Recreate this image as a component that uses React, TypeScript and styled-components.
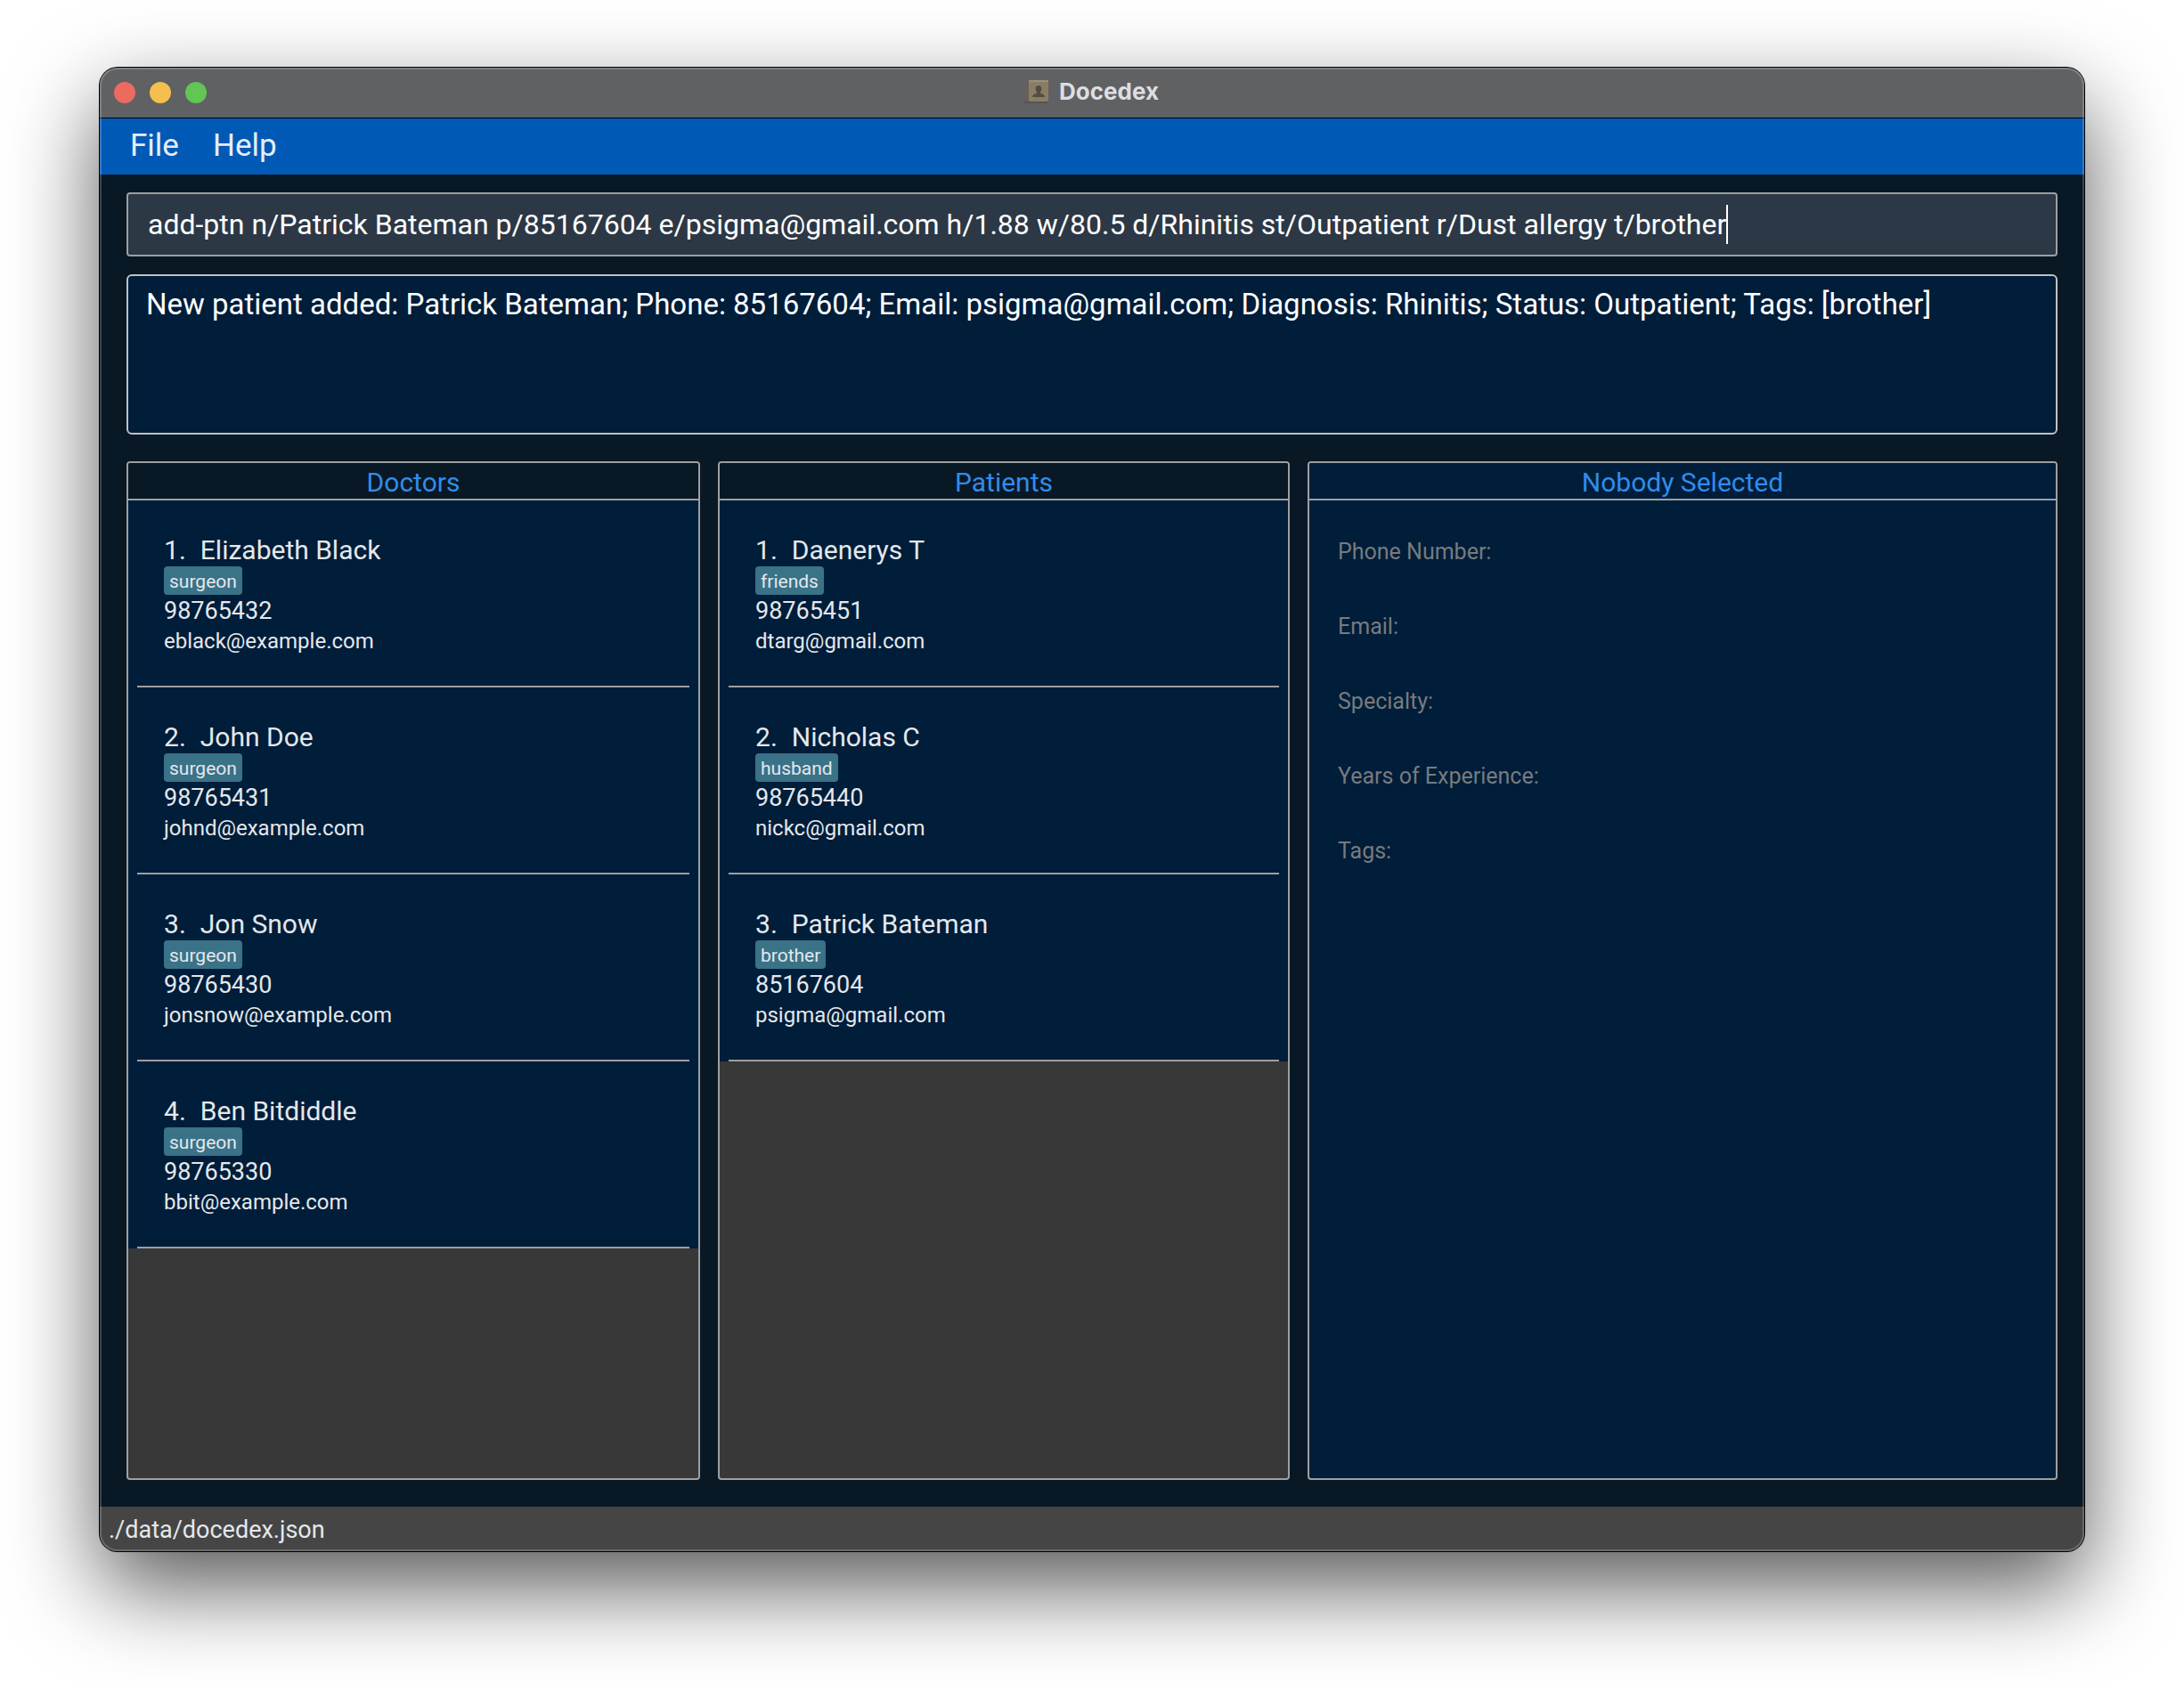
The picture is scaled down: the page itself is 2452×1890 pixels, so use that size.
import React, { useState } from 'react';
import styled, { createGlobalStyle } from 'styled-components';

const GlobalStyle = createGlobalStyle`
  *, *::before, *::after { box-sizing: border-box; }
  body { margin: 0; background: #fff; }
`;

const fontStack = 'Roboto, "Liberation Sans", sans-serif';
const line = '#9d9fa0';
const navy = '#001d3a';
const ink = '#091825';

const Desktop = styled.div`
  display: flex;
  min-height: 100vh;
  padding: 76px 112px 148px;
  font-family: ${fontStack};
  color: #e4e8eb;
`;

const Frame = styled.div`
  flex: 1;
  min-width: 0;
  display: flex;
  border-radius: 20px;
  box-shadow: 0 0 0 1px #000, 0 40px 100px rgba(0, 0, 0, 0.66);
`;

const AppWindow = styled.div`
  position: relative;
  flex: 1;
  min-width: 0;
  display: flex;
  flex-direction: column;
  overflow: hidden;
  border-radius: 20px;
  background: ${ink};
`;

const Edge = styled.div`
  position: absolute;
  inset: 0;
  border-radius: 20px;
  box-shadow: inset 0 0 0 2px rgba(255, 255, 255, 0.2);
  pointer-events: none;
`;

const TitleBar = styled.header`
  display: grid;
  grid-template-columns: 1fr auto 1fr;
  align-items: center;
  height: 57px;
  padding: 0 16px;
  border-bottom: 1px solid #000;
  background: #5f6163;
`;

const Lights = styled.div`
  display: flex;
  gap: 16px;
`;

const Light = styled.button<{ $color: string }>`
  width: 24px;
  height: 24px;
  padding: 0;
  border: 0;
  border-radius: 50%;
  background: ${(p) => p.$color};
`;

const Title = styled.h1`
  display: flex;
  align-items: center;
  gap: 10px;
  margin: 0;
  padding: 0 2px 2px 0;
  font: 700 26px/32px Inter, sans-serif;
  color: #dddee0;
`;

const MenuBar = styled.nav`
  display: flex;
  gap: 38px;
  padding: 6px 34px 7px;
  background: #005ab5;
`;

const MenuButton = styled.button`
  padding: 0;
  border: 0;
  background: none;
  font: 35px/50px ${fontStack};
  color: #e4eef8;
`;

const Body = styled.main`
  flex: 1;
  display: flex;
  flex-direction: column;
  gap: 20px;
  padding: 20px 30px;
`;

const CommandBox = styled.label`
  display: flex;
  align-items: center;
  padding: 0 22px;
  border: 2px solid ${line};
  border-radius: 4px;
  background: #2c3845;
  cursor: text;
`;

const CommandInput = styled.input`
  field-sizing: content;
  min-width: 0;
  height: 68px;
  padding: 0;
  border: 0;
  outline: 0;
  background: none;
  font: 32px/44px ${fontStack};
  color: #fff;
  caret-color: transparent;
`;

const Caret = styled.i`
  flex: none;
  width: 2px;
  height: 44px;
  background: #fff;
`;

const Result = styled.output`
  display: block;
  min-height: 180px;
  padding: 10px 20px;
  border: 2px solid #bfc1c5;
  border-radius: 6px;
  background: ${navy};
  font: 33px/44px ${fontStack};
  color: #fff;
`;

const Panels = styled.div`
  flex: 1;
  display: grid;
  grid-template-columns: 644fr 642fr 842fr;
  gap: 20px;
  padding: 10px 0;
`;

const Panel = styled.section<{ $fill: string }>`
  display: flex;
  flex-direction: column;
  overflow: hidden;
  border: 2px solid ${line};
  border-radius: 4px;
  background: ${(p) => p.$fill};
`;

const PanelTitle = styled.h2<{ $fill: string }>`
  margin: 0;
  padding-top: 4px;
  border-bottom: 2px solid ${line};
  background: ${(p) => p.$fill};
  font: 30px/36px ${fontStack};
  text-align: center;
  color: #318ceb;
`;

const List = styled.ol`
  margin: 0;
  padding: 0;
  list-style: none;
`;

const Item = styled.li`
  padding: 0 10px;
  background: ${navy};
`;

const Card = styled.article`
  padding: 38px 30px 33px;
  border-bottom: 2px solid ${line};
`;

const Name = styled.h3`
  display: flex;
  gap: 16px;
  margin: 0;
  font: 30px/36px ${fontStack};
`;

const Tag = styled.span`
  display: block;
  width: fit-content;
  margin-bottom: 1px;
  padding: 2px 6px 0;
  border-radius: 4px;
  background: #3a7288;
  font-size: 21px;
  line-height: 30px;
`;

const Phone = styled.p`
  margin: 0;
  font-size: 27px;
  line-height: 34px;
`;

const Email = styled.p`
  margin: 0;
  font-size: 24px;
  line-height: 34px;
`;

const Fields = styled.ul`
  display: grid;
  gap: 48px;
  margin: 0;
  padding: 40px 32px;
  list-style: none;
  font-size: 25px;
  line-height: 36px;
  color: #777b7e;
`;

const StatusBar = styled.footer`
  padding: 8px 10px 6px;
  background: #454545;
  font-size: 27px;
  line-height: 36px;
`;

const BookIcon = () => (
  <svg width="30" height="28" viewBox="0 0 30 28" aria-hidden="true">
    <rect x="1" y="2" width="27" height="25" rx="2" fill="#555453" />
    <rect x="1" y="1" width="5" height="24" rx="1" fill="#655f5d" />
    <rect x="6" y="1" width="22" height="24" rx="1" fill="#8b7d62" />
    <rect x="6" y="1" width="22" height="2" fill="#9a907d" />
    <path
      d="M17 7c2.200 0 3.400 1.500 3.400 3.700 0 1.600-.8 2.800-1.500 3.600v1.500c1.800.7 5 1.300 5 4.200H10.100c0-2.900 3.200-3.500 5-4.200v-1.500c-.7-.8-1.500-2-1.500-3.600C13.600 8.500 14.800 7 17 7z"
      fill="#524c44"
    />
  </svg>
);

type Person = { name: string; tag: string; phone: string; email: string };

const doctors: Person[] = [
  { name: 'Elizabeth Black', tag: 'surgeon', phone: '98765432', email: 'eblack@example.com' },
  { name: 'John Doe', tag: 'surgeon', phone: '98765431', email: 'johnd@example.com' },
  { name: 'Jon Snow', tag: 'surgeon', phone: '98765430', email: 'jonsnow@example.com' },
  { name: 'Ben Bitdiddle', tag: 'surgeon', phone: '98765330', email: 'bbit@example.com' },
];

const patients: Person[] = [
  { name: 'Daenerys T', tag: 'friends', phone: '98765451', email: 'dtarg@gmail.com' },
  { name: 'Nicholas C', tag: 'husband', phone: '98765440', email: 'nickc@gmail.com' },
  { name: 'Patrick Bateman', tag: 'brother', phone: '85167604', email: 'psigma@gmail.com' },
];

const fields = ['Phone Number:', 'Email:', 'Specialty:', 'Years of Experience:', 'Tags:'];

const PersonPanel = ({ title, people }: { title: string; people: Person[] }) => (
  <Panel $fill="#383838">
    <PanelTitle $fill={ink}>{title}</PanelTitle>
    <List>
      {people.map((person, i) => (
        <Item key={person.email}>
          <Card>
            <Name>
              <span>{i + 1}.</span>
              <span>{person.name}</span>
            </Name>
            <Tag>{person.tag}</Tag>
            <Phone>{person.phone}</Phone>
            <Email>{person.email}</Email>
          </Card>
        </Item>
      ))}
    </List>
  </Panel>
);

export default function App() {
  const [command, setCommand] = useState(
    'add-ptn n/Patrick Bateman p/85167604 e/psigma@gmail.com h/1.88 w/80.5 d/Rhinitis st/Outpatient r/Dust allergy t/brother'
  );

  return (
    <>
      <GlobalStyle />
      <Desktop>
        <Frame>
          <AppWindow>
            <TitleBar>
              <Lights>
                <Light $color="#ed6a5f" aria-label="Close" />
                <Light $color="#f5bf4f" aria-label="Minimize" />
                <Light $color="#61c654" aria-label="Zoom" />
              </Lights>
              <Title>
                <BookIcon />
                Docedex
              </Title>
            </TitleBar>
            <MenuBar>
              <MenuButton>File</MenuButton>
              <MenuButton>Help</MenuButton>
            </MenuBar>
            <Body>
              <CommandBox>
                <CommandInput
                  aria-label="Command"
                  value={command}
                  onChange={(e) => setCommand(e.target.value)}
                />
                <Caret />
              </CommandBox>
              <Result>
                New patient added: Patrick Bateman; Phone: 85167604; Email: psigma@gmail.com; Diagnosis: Rhinitis;
                Status: Outpatient; Tags: [brother]
              </Result>
              <Panels>
                <PersonPanel title="Doctors" people={doctors} />
                <PersonPanel title="Patients" people={patients} />
                <Panel $fill={navy}>
                  <PanelTitle $fill={navy}>Nobody Selected</PanelTitle>
                  <Fields>
                    {fields.map((label) => (
                      <li key={label}>{label}</li>
                    ))}
                  </Fields>
                </Panel>
              </Panels>
            </Body>
            <StatusBar>./data/docedex.json</StatusBar>
            <Edge />
          </AppWindow>
        </Frame>
      </Desktop>
    </>
  );
}
